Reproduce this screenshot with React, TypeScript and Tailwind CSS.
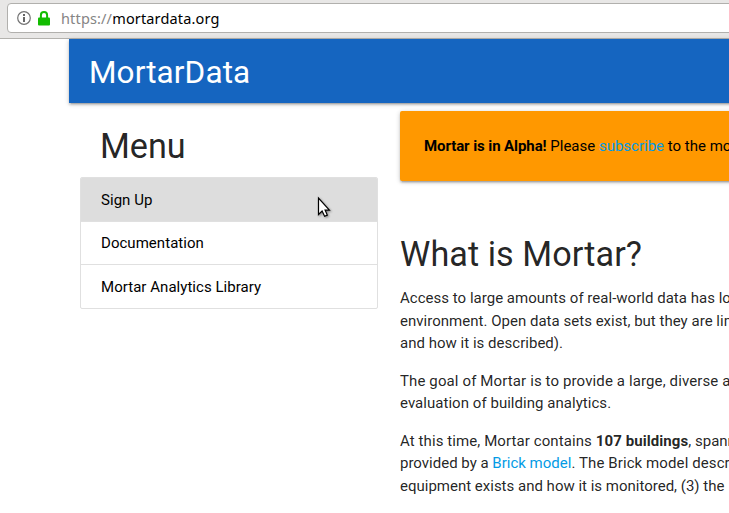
import React from "react";

function AddressBar() {
  return (
    <div className="h-[39px] w-full border-b border-[#b3b2ae] bg-[#e8e7e6] pt-[3px] pl-[7px]">
      <div className="flex h-[30px] w-[760px] items-center rounded border border-[#b1b0ad] bg-white pl-[9px]">
        <svg width="14" height="14" viewBox="0 0 14 14" className="shrink-0">
          <circle cx="7" cy="7" r="6.3" fill="none" stroke="#737373" strokeWidth="1.2" />
          <rect x="6" y="3" width="2" height="2" fill="#666" />
          <rect x="6" y="6" width="2" height="5" fill="#666" />
        </svg>
        <svg width="12" height="15" viewBox="0 0 12 15" className="ml-[7px] shrink-0">
          <path d="M2.9 7V4.2a3.1 3.1 0 0 1 6.2 0V7" fill="none" stroke="#12bc00" strokeWidth="2" />
          <rect y="6.5" width="12" height="8" rx="1" fill="#12bc00" />
        </svg>
        <span className="ml-[11px] font-['Noto_Sans',sans-serif] text-[14.5px] leading-[20px] tracking-[0.15px] whitespace-nowrap text-black">
          <span className="text-[#858585]">https://</span>mortardata.org
        </span>
      </div>
    </div>
  );
}

const menuItems = ["Sign Up", "Documentation", "Mortar Analytics Library"];

function Menu() {
  return (
    <aside className="w-[298px] shrink-0 pt-[24.5px]">
      <h4 className="pl-5 text-[34.2px] leading-[37.6px]">Menu</h4>
      <ul className="mt-[12.4px] overflow-hidden rounded-[2px] border border-[#e0e0e0] text-black">
        {menuItems.map((item, i) => (
          <li
            key={item}
            className={`px-5 pt-[10.4px] pb-[9.6px] leading-[22.5px] tracking-[0.04px] ${i === 0 ? "bg-[#ddd]" : ""} ${i < 2 ? "border-b border-[#e0e0e0]" : ""}`}
          >
            {item}
          </li>
        ))}
      </ul>
    </aside>
  );
}

const raised =
  "shadow-[0_2px_2px_0_rgba(0,0,0,0.14),0_3px_1px_-2px_rgba(0,0,0,0.12),0_1px_5px_0_rgba(0,0,0,0.2)]";

export default function App() {
  return (
    <div className="relative h-[513px] w-[729px] overflow-hidden bg-white font-[Roboto,sans-serif] text-[15px] leading-[22.5px] text-[rgba(0,0,0,0.87)]">
      <AddressBar />
      <div className="ml-[69px] w-[800px]">
        <nav className={`flex h-16 items-center bg-[#1565c0] pl-5 text-[31.5px] text-white ${raised}`}>
          <span className="pt-[4px] leading-[60px] tracking-[0.1px]">MortarData</span>
        </nav>
        <div className="flex pl-[11px] whitespace-nowrap">
          <Menu />
          <main className="ml-[22px] w-[440px] shrink-0 pt-2">
            <div className={`h-[70px] rounded-[2px] bg-[#ff9800] px-6 pt-6 text-black ${raised}`}>
              <b className="font-bold tracking-[-0.09px]">Mortar is in Alpha!</b> Please{" "}
              <a className="text-[#039be5]">subscribe</a> to the mortar
            </div>
            <h4 className="mt-[55px] text-[34.2px] leading-[37.6px] tracking-[0.06px]">What is Mortar?</h4>
            <p className="mt-[13.8px] tracking-[0.02px]">
              Access to large amounts of real-world data has long
              <br />
              environment. Open data sets exist, but they are limited
              <br />
              and how it is described).
            </p>
            <p className="mt-[15px]">
              <span className="tracking-[0.12px]">The goal of Mortar is to provide a large, diverse and</span>
              <br />
              <span className="tracking-[0.04px]">evaluation of building analytics.</span>
            </p>
            <p className="mt-[15px]">
              <span className="tracking-[0.09px]">
                At this time, Mortar contains <b className="font-bold">107 buildings</b>
              </span>
              , spanning
              <br />
              provided by a <a className="text-[#039be5]">Brick model</a>
              <span className="tracking-[0.1px]">. The Brick model describes</span>
              <br />
              equipment exists and how it is monitored, (3) the
            </p>
          </main>
        </div>
      </div>
      <svg
        width="16"
        height="23"
        viewBox="0 0 16 23"
        className="absolute top-[196px] left-[317px] drop-shadow-[1px_1px_1px_rgba(0,0,0,0.4)]"
      >
        <path
          d="M1.5 2v16.5l3.6-3.4 2.5 5.2 2.7-1.2-2.2-5h4.3z"
          fill="white"
          stroke="black"
          strokeWidth="1.2"
        />
      </svg>
    </div>
  );
}
